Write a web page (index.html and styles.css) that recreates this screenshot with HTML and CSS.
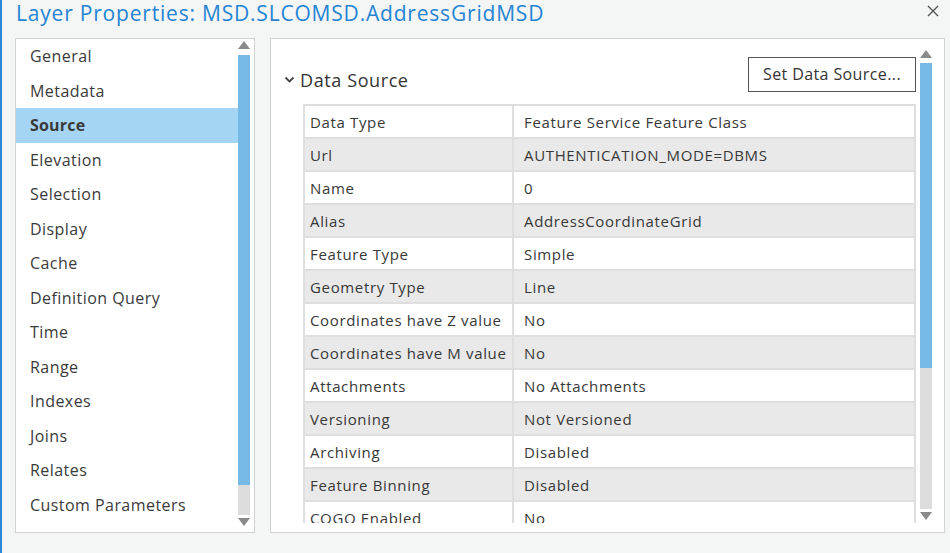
FILE: index.html
```html
<!DOCTYPE html>
<html lang="en">
<head>
  <meta charset="UTF-8">
  <title>Layer Properties</title>
  <link rel="stylesheet" href="styles.css">
</head>
<body>
  <div class="dialog">
    <div class="dialog-header">
      <h1 class="dialog-title">Layer Properties: MSD.SLCOMSD.AddressGridMSD</h1>
      <button class="close-btn" type="button" aria-label="Close">
        <svg width="14" height="14" viewBox="0 0 14 14"><path d="M2 2 L12 12 M12 2 L2 12" stroke="#555" stroke-width="1.4" fill="none"/></svg>
      </button>
    </div>

    <div class="dialog-body">
      <div class="nav-panel">
        <ul class="nav-list">
          <li>General</li>
          <li>Metadata</li>
          <li class="active">Source</li>
          <li>Elevation</li>
          <li>Selection</li>
          <li>Display</li>
          <li>Cache</li>
          <li>Definition Query</li>
          <li>Time</li>
          <li>Range</li>
          <li>Indexes</li>
          <li>Joins</li>
          <li>Relates</li>
          <li>Custom Parameters</li>
          <li>Page Query</li>
        </ul>
        <div class="vscroll nav-scroll">
          <span class="arrow-up"></span>
          <div class="track"><div class="thumb"></div></div>
          <span class="arrow-down"></span>
        </div>
      </div>

      <div class="content-panel">
        <div class="pane">
          <div class="pane-clip">
            <div class="section-head">
              <h2 class="section-title">
                <svg width="11" height="8" viewBox="0 0 11 8"><path d="M1.5 1.5 L5.5 5.5 L9.5 1.5" stroke="#444" stroke-width="1.8" fill="none"/></svg>
                Data Source
              </h2>
              <button class="set-source" type="button">Set Data Source...</button>
            </div>
            <table class="props">
              <tr><td>Data Type</td><td>Feature Service Feature Class</td></tr>
              <tr><td>Url</td><td>AUTHENTICATION_MODE=DBMS</td></tr>
              <tr><td>Name</td><td>0</td></tr>
              <tr><td>Alias</td><td>AddressCoordinateGrid</td></tr>
              <tr><td>Feature Type</td><td>Simple</td></tr>
              <tr><td>Geometry Type</td><td>Line</td></tr>
              <tr><td>Coordinates have Z value</td><td>No</td></tr>
              <tr><td>Coordinates have M value</td><td>No</td></tr>
              <tr><td>Attachments</td><td>No Attachments</td></tr>
              <tr><td>Versioning</td><td>Not Versioned</td></tr>
              <tr><td>Archiving</td><td>Disabled</td></tr>
              <tr><td>Feature Binning</td><td>Disabled</td></tr>
              <tr><td>COGO Enabled</td><td>No</td></tr>
            </table>
          </div>
        </div>
        <div class="vscroll content-scroll">
          <span class="arrow-up"></span>
          <div class="track"><div class="thumb"></div></div>
          <span class="arrow-down"></span>
        </div>
      </div>
    </div>
  </div>
</body>
</html>
```

FILE: styles.css
```css
html, body {
  margin: 0;
  padding: 0;
  height: 100%;
}
body {
  font-family: "Open Sans", "Noto Sans", sans-serif;
  color: #3a3a3a;
  background-color: #f4f5f5;
}
.dialog {
  height: 553px;
  border-left: 2px solid #2b88d8;
  box-sizing: border-box;
  display: flex;
  flex-direction: column;
  overflow: hidden;
}
.dialog-header {
  height: 38px;
  display: flex;
  align-items: flex-start;
  justify-content: space-between;
}
.dialog-title {
  margin: 0;
  padding: 0 0 0 14px;
  font-size: 21px;
  letter-spacing: 0.8px;
  font-weight: normal;
  line-height: 26px;
  color: #2584d3;
}
.close-btn {
  background: none;
  border: none;
  padding: 0;
  margin: 4px 9px 0 0;
  width: 16px;
  height: 16px;
}
.dialog-body {
  display: flex;
  gap: 15px;
  padding-left: 13px;
  height: 495px;
}

/* left navigation */
.nav-panel {
  width: 240px;
  box-sizing: border-box;
  border: 1px solid #d2d2d2;
  background: #fff;
  display: flex;
  overflow: hidden;
}
.nav-list {
  list-style: none;
  margin: 0;
  padding: 0;
  width: 222px;
  flex: none;
}
.nav-list li {
  height: 34.5px;
  line-height: 34.5px;
  padding-left: 14px;
  font-size: 16px;
  letter-spacing: 0.45px;
  white-space: nowrap;
}
.nav-list li.active {
  background: #a5d5f5;
  font-weight: bold;
  letter-spacing: 0.2px;
}

/* scrollbars */
.vscroll {
  width: 12px;
  flex: none;
  display: flex;
  flex-direction: column;
  align-items: center;
}
.arrow-up, .arrow-down {
  width: 0;
  height: 0;
  border-left: 6px solid transparent;
  border-right: 6px solid transparent;
}
.arrow-up {
  border-bottom: 8px solid #8a8a8a;
}
.arrow-down {
  border-top: 8px solid #8a8a8a;
}
.track {
  width: 12px;
  background: #dcdcdc;
  display: flex;
  flex-direction: column;
}
.thumb {
  background: #76b8e6;
}
.nav-scroll {
  padding-top: 2px;
}
.nav-scroll .track {
  margin: 6px 0 3px;
  height: 460px;
}
.nav-scroll .thumb {
  height: 430px;
}
.content-scroll {
  padding-top: 11px;
  margin-right: 12px;
}
.content-scroll .track {
  margin: 5px 0 3px;
  height: 446px;
}
.content-scroll .thumb {
  height: 305px;
}

/* right content */
.content-panel {
  width: 675px;
  box-sizing: border-box;
  border: 1px solid #d2d2d2;
  background: #fff;
  display: flex;
}
.pane {
  flex: 1;
  display: flex;
  flex-direction: column;
  padding-bottom: 9px;
  min-width: 0;
}
.pane-clip {
  flex: 1;
  overflow: hidden;
  padding: 18px 4px 0 13px;
}
.section-head {
  display: flex;
  justify-content: space-between;
  align-items: flex-start;
}
.section-title {
  margin: 11px 0 0;
  font-size: 18px;
  letter-spacing: 0.6px;
  font-weight: normal;
  line-height: 24px;
  color: #333;
  display: flex;
  align-items: center;
  gap: 5px;
}
.set-source {
  width: 168px;
  height: 35px;
  background: #fff;
  border: 1px solid #555;
  font-family: inherit;
  font-size: 16px;
  letter-spacing: 0.4px;
  color: #333;
  padding: 0 0 2px;
}
.props {
  margin: 12px 0 0 19px;
  width: calc(100% - 19px);
  border-collapse: collapse;
  font-size: 15px;
  letter-spacing: 0.65px;
}
.props td {
  height: 31px;
  padding: 0 0 0 5px;
  border: 2px solid #dedede;
  white-space: nowrap;
  color: #383838;
}
.props td:first-child {
  width: 202px;
}
.props td + td {
  padding-left: 10px;
}
.props tr:nth-child(even) td {
  background: #e9e9e9;
}
```
